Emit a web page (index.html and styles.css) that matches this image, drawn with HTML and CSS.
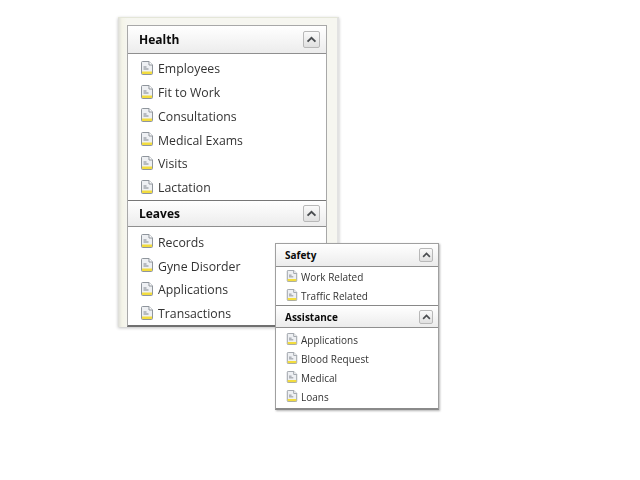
FILE: index.html
```html
<!DOCTYPE html>
<html lang="en">

<head>
  <meta charset="utf-8">
  <title>Menu panels</title>
  <link rel="stylesheet" href="styles.css">
</head>

<body>
  <svg class="defs" width="0" height="0">
    <symbol id="doc" viewBox="0 0 14 14">
      <path d="M1.500 1.500q0-1 1-1h6.500l3.500 3.500v8.500q0 1-1 1h-9q-1 0-1-1z" fill="#eef0f3" stroke="#8f959c"/>
      <path d="M9 .5v3.500h3.500" fill="#fff" stroke="#8f959c"/>
      <path d="M3.500 6h3M3.500 8h5" stroke="#7f858c" fill="none"/>
      <path d="M2 10.500h10v2.500h-10z" fill="#f2dc3e"/>
    </symbol>
    <symbol id="up" viewBox="0 0 12 8">
      <path d="M1.500 6.500 6 2l4.500 4.500" fill="none" stroke="#4a4d50" stroke-width="2.200"/>
    </symbol>
  </svg>

  <div class="panel large">
    <div class="panel-inner">
      <div class="head">
        <span>Health</span>
        <button class="toggle"><svg><use href="#up"/></svg></button>
      </div>
      <ul class="items">
        <li><svg class="doc"><use href="#doc"/></svg>Employees</li>
        <li><svg class="doc"><use href="#doc"/></svg>Fit to Work</li>
        <li><svg class="doc"><use href="#doc"/></svg>Consultations</li>
        <li><svg class="doc"><use href="#doc"/></svg>Medical Exams</li>
        <li><svg class="doc"><use href="#doc"/></svg>Visits</li>
        <li><svg class="doc"><use href="#doc"/></svg>Lactation</li>
      </ul>
      <div class="head">
        <span>Leaves</span>
        <button class="toggle"><svg><use href="#up"/></svg></button>
      </div>
      <ul class="items">
        <li><svg class="doc"><use href="#doc"/></svg>Records</li>
        <li><svg class="doc"><use href="#doc"/></svg>Gyne Disorder</li>
        <li><svg class="doc"><use href="#doc"/></svg>Applications</li>
        <li><svg class="doc"><use href="#doc"/></svg>Transactions</li>
      </ul>
    </div>
  </div>

  <div class="panel small">
    <div class="head">
      <span>Safety</span>
      <button class="toggle"><svg><use href="#up"/></svg></button>
    </div>
    <ul class="items">
      <li><svg class="doc"><use href="#doc"/></svg>Work Related</li>
      <li><svg class="doc"><use href="#doc"/></svg>Traffic Related</li>
    </ul>
    <div class="head">
      <span>Assistance</span>
      <button class="toggle"><svg><use href="#up"/></svg></button>
    </div>
    <ul class="items">
      <li><svg class="doc"><use href="#doc"/></svg>Applications</li>
      <li><svg class="doc"><use href="#doc"/></svg>Blood Request</li>
      <li><svg class="doc"><use href="#doc"/></svg>Medical</li>
      <li><svg class="doc"><use href="#doc"/></svg>Loans</li>
    </ul>
  </div>
</body>

</html>
```
FILE: styles.css
```css
html, body {
  height: 100%;
}

body {
  margin: 0;
  background-color: #ffffff;
  color: #333333;
  font-family: 'Open Sans', 'Noto Sans', sans-serif;
  overflow: hidden;
}

.defs {
  display: block;
  height: 0;
}

ul {
  list-style: none;
  margin: 0;
  padding: 0;
}

/* both panels sit on a free canvas */
.panel {
  position: absolute;
  box-sizing: border-box;
  filter: blur(0.35px);
}

.large {
  left: 118px;
  top: 17px;
  width: 221px;
  height: 310px;
  padding: 7px 10px 0 9px;
  background: linear-gradient(to right, #dcdcd8, #f4f4e8 4px, #f6f6f0 9px);
  border-top: 1px solid #e4e6d8;
  border-right: 2px solid #e2e2e2;
  box-shadow: 0 1px 3px rgba(0, 0, 0, 0.25);
}

.panel-inner {
  background-color: #ffffff;
  border: 1px solid #a8a8a8;
  border-bottom: 2px solid #707070;
  height: 100%;
  box-sizing: border-box;
}

.small {
  left: 275px;
  top: 243px;
  width: 164px;
  height: 167px;
  background-color: #ffffff;
  border: 1px solid #a0a0a0;
  border-bottom: 2px solid #8a8a8a;
  box-shadow: 1px 1px 2px rgba(0, 0, 0, 0.3);
}

.head {
  display: flex;
  align-items: center;
  justify-content: space-between;
  box-sizing: border-box;
  background: linear-gradient(to bottom, #ffffff, #ececec);
  border-bottom: 1px solid #8f8f8f;
  color: #0a0a0a;
  font-weight: 700;
}

.large .head {
  height: 28px;
  padding: 0 6px 0 11px;
  font-size: 12px;
}

.large .items + .head {
  height: 27px;
  border-top: 1px solid #777777;
}

.small .head {
  height: 23px;
  padding: 0 5px 0 9px;
  font-size: 10px;
}

.small .items + .head {
  border-top: 1px solid #888888;
}

.toggle {
  display: flex;
  align-items: center;
  justify-content: center;
  padding: 0;
  background: linear-gradient(to bottom, #fafafa, #e0e0e0);
  border: 1px solid #b8b8b8;
  border-radius: 2px;
}

.toggle svg {
  display: block;
}

.large .toggle {
  width: 17px;
  height: 17px;
}

.large .toggle svg {
  width: 11px;
  height: 7px;
}

.small .toggle {
  width: 14px;
  height: 14px;
}

.small .toggle svg {
  width: 9px;
  height: 6px;
}

.items li {
  display: flex;
  align-items: center;
}

.doc {
  margin-top: -2px;
}

.large .items {
  padding: 3px 0 0 12px;
}

.large .head + .items + .head + .items {
  padding-top: 4px;
}

.large .items li {
  height: 23.750px;
  gap: 4px;
  font-size: 12.300px;
}

.large .doc {
  width: 14px;
  height: 14px;
}

.small .items {
  padding: 0 0 0 10px;
}

.small .head + .items + .head + .items {
  padding-top: 2px;
}

.small .items li {
  height: 19px;
  gap: 3px;
  font-size: 10px;
}

.small .doc {
  width: 12px;
  height: 12px;
}
```
